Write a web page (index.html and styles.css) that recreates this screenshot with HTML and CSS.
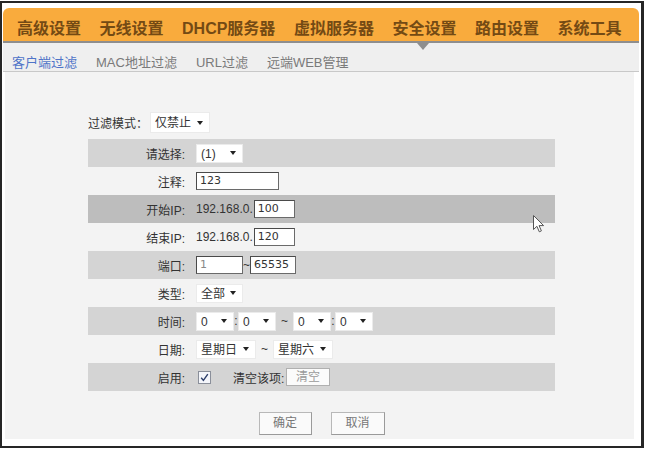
FILE: index.html
```html
<!DOCTYPE html>
<html lang="zh-CN">
<head>
<meta charset="utf-8">
<title>客户端过滤</title>
<link rel="stylesheet" href="styles.css">
</head>
<body>
<div class="frame">
  <div class="topnav">
    <span class="nav-item">高级设置</span>
    <span class="nav-item">无线设置</span>
    <span class="nav-item">DHCP服务器</span>
    <span class="nav-item">虚拟服务器</span>
    <span class="nav-item">安全设置</span>
    <span class="nav-item">路由设置</span>
    <span class="nav-item">系统工具</span>
    <span class="pointer"></span>
  </div>
  <div class="subnav">
    <span class="sub-item active">客户端过滤</span>
    <span class="sub-item">MAC地址过滤</span>
    <span class="sub-item">URL过滤</span>
    <span class="sub-item">远端WEB管理</span>
  </div>
  <div class="content">
    <div class="form">
      <div class="mode">
        <span class="mode-label">过滤模式：</span>
        <div class="sel sel-mode">仅禁止<i class="caret"></i></div>
      </div>
      <div class="rows">
        <div class="row gray">
          <div class="lbl">请选择:</div>
          <div class="val"><div class="sel sel-47">(1)<i class="caret"></i></div></div>
        </div>
        <div class="row">
          <div class="lbl">注释:</div>
          <div class="val"><div class="inp inp-83">123</div></div>
        </div>
        <div class="row hover">
          <div class="lbl">开始IP:</div>
          <div class="val"><span class="ip">192.168.0.</span><div class="inp inp-41">100</div></div>
        </div>
        <div class="row">
          <div class="lbl">结束IP:</div>
          <div class="val"><span class="ip">192.168.0.</span><div class="inp inp-41">120</div></div>
        </div>
        <div class="row gray">
          <div class="lbl">端口:</div>
          <div class="val"><div class="inp inp-47 light">1</div><span class="tilde-s">~</span><div class="inp inp-46">65535</div></div>
        </div>
        <div class="row">
          <div class="lbl">类型:</div>
          <div class="val"><div class="sel sel-47">全部<i class="caret"></i></div></div>
        </div>
        <div class="row gray">
          <div class="lbl">时间:</div>
          <div class="val">
            <div class="sel sel-38">0<i class="caret"></i></div><span class="colon">:</span><div class="sel sel-38">0<i class="caret"></i></div><span class="tilde">~</span><div class="sel sel-38">0<i class="caret"></i></div><span class="colon">:</span><div class="sel sel-38">0<i class="caret"></i></div>
          </div>
        </div>
        <div class="row">
          <div class="lbl">日期:</div>
          <div class="val">
            <div class="sel sel-60">星期日<i class="caret"></i></div><span class="tilde">~</span><div class="sel sel-60">星期六<i class="caret"></i></div>
          </div>
        </div>
        <div class="row gray">
          <div class="lbl">启用:</div>
          <div class="val">
            <span class="check"><svg width="13" height="13" viewBox="0 0 13 13"><rect x="0.5" y="0.5" width="12" height="12" fill="#f4f6fb" stroke="#8a8f9a"/><path d="M3.2 6.8 L5.4 9.4 L9.8 3.2" fill="none" stroke="#2d3f6b" stroke-width="1.4"/></svg></span>
            <span class="clear-label">清空该项:</span>
            <span class="btn-small">清空</span>
          </div>
        </div>
      </div>
      <div class="actions">
        <span class="btn btn-ok">确定</span>
        <span class="btn btn-cancel">取消</span>
      </div>
    </div>
  </div>
</div>
<svg class="cursor" width="13" height="18" viewBox="0 0 13 18"><path d="M0.5 0.5 L0.5 14.5 L3.9 11.3 L6.3 16.8 L8.4 15.9 L6.1 10.6 L10.6 10.6 Z" fill="#fff" stroke="#555" stroke-width="1"/></svg>
</body>
</html>
```
FILE: styles.css
```css
html, body {
  margin: 0;
  padding: 0;
  background: #ffffff;
}
body {
  font-family: "Liberation Sans", "Noto Sans CJK SC", sans-serif;
  color: #333;
  position: relative;
}
.frame {
  box-sizing: border-box;
  width: 644px;
  height: 447px;
  margin-top: 1px;
  border: 2px solid #262626;
  border-right-width: 3px;
  background: #fff;
  padding: 5px 2px 7px 1px;
  display: flex;
  flex-direction: column;
}
.topnav {
  position: relative;
  height: 33px;
  background: #f9ab3d;
  border-radius: 6px 6px 0 0;
  border-bottom: 2px solid #8e8e8e;
  display: flex;
  align-items: center;
  padding-left: 14px;
  gap: 18.5px;
  font-size: 16px;
  font-weight: bold;
  color: #744a14;
  white-space: nowrap;
}
.nav-item {
  line-height: 20px;
  padding-top: 8px;
}
.pointer {
  position: absolute;
  left: 414px;
  top: 35px;
  width: 0;
  height: 0;
  border-left: 6px solid transparent;
  border-right: 6px solid transparent;
  border-top: 7px solid #8e8e8e;
}
.subnav {
  box-sizing: content-box;
  height: 20px;
  background: #efefef;
  border-bottom: 1px solid #c8c8c8;
  display: flex;
  align-items: center;
  padding-left: 9px;
  padding-top: 8px;
  gap: 19px;
  font-size: 13px;
  color: #7a7a7a;
  white-space: nowrap;
}
.sub-item.active {
  color: #4f74c8;
}
.content {
  flex: 1;
  background: #f3f3f3;
  margin: 0 5px 0 2px;
}
.form {
  margin-left: 83px;
  width: 467px;
  font-size: 12px;
}
.mode {
  margin-top: 40px;
  height: 21px;
  margin-bottom: 6px;
  display: flex;
  align-items: center;
}
.mode-label {
  width: 62px;
}
.sel {
  position: relative;
  box-sizing: border-box;
  height: 19px;
  line-height: 19px;
  background: #fff;
  border: 1px solid #ebebeb;
  padding-left: 4px;
  color: #333;
  font-size: 12px;
  white-space: nowrap;
}
.sel-mode {
  width: 60px;
  height: 21px;
  line-height: 21px;
}
.sel-47 { width: 47px; }
.sel-38 { width: 38px; }
.sel-60 { width: 60px; }
.caret {
  position: absolute;
  right: 6px;
  top: 50%;
  margin-top: -2px;
  width: 0;
  height: 0;
  border-left: 3.5px solid transparent;
  border-right: 3.5px solid transparent;
  border-top: 4px solid #222;
}
.rows {
  display: flex;
  flex-direction: column;
}
.row {
  height: 28px;
  display: flex;
  align-items: center;
}
.row.gray {
  background: #d4d4d4;
}
.row.hover {
  background: #bdbdbd;
}
.lbl {
  width: 97px;
  text-align: right;
  color: #333;
}
.val {
  padding-left: 11px;
  display: flex;
  align-items: center;
}
.inp {
  box-sizing: border-box;
  height: 18px;
  line-height: 16px;
  background: #fff;
  border: 1px solid #6a6a6a;
  border-top-color: #4a4a4a;
  border-left-color: #4a4a4a;
  padding-left: 3px;
  font-family: "DejaVu Sans", "Liberation Sans", sans-serif;
  font-size: 11px;
  color: #333;
}
.inp.light { color: #888; }
.inp-83 { width: 83px; }
.inp-41 { width: 41px; }
.inp-47 { width: 47px; }
.inp-46 { width: 46px; }
.ip {
  flex: none;
  margin-right: 1px;
  color: #333;
}
.tilde-s {
  width: 7px;
  text-align: center;
}
.colon {
  width: 4px;
  text-align: center;
}
.tilde {
  width: 17px;
  text-align: center;
}
.check {
  display: flex;
  margin-left: 2px;
  margin-top: 1px;
}
.clear-label {
  margin-left: 22px;
  width: 53px;
}
.btn-small {
  box-sizing: border-box;
  width: 44px;
  height: 18px;
  line-height: 16px;
  text-align: center;
  background: #fbfbfb;
  border: 1px solid #b0b0b0;
  color: #9a9a9a;
}
.actions {
  margin-top: 21px;
  display: flex;
  justify-content: center;
  gap: 19px;
}
.btn {
  box-sizing: border-box;
  height: 23px;
  line-height: 21px;
  text-align: center;
  background: #fafafa;
  border: 1px solid #b8b8b8;
  border-right-color: #9a9a9a;
  border-bottom-color: #9a9a9a;
  color: #777;
  font-size: 12px;
}
.btn-ok { width: 53px; }
.btn-cancel { width: 54px; }
.cursor {
  position: absolute;
  left: 533px;
  top: 215px;
}
```
